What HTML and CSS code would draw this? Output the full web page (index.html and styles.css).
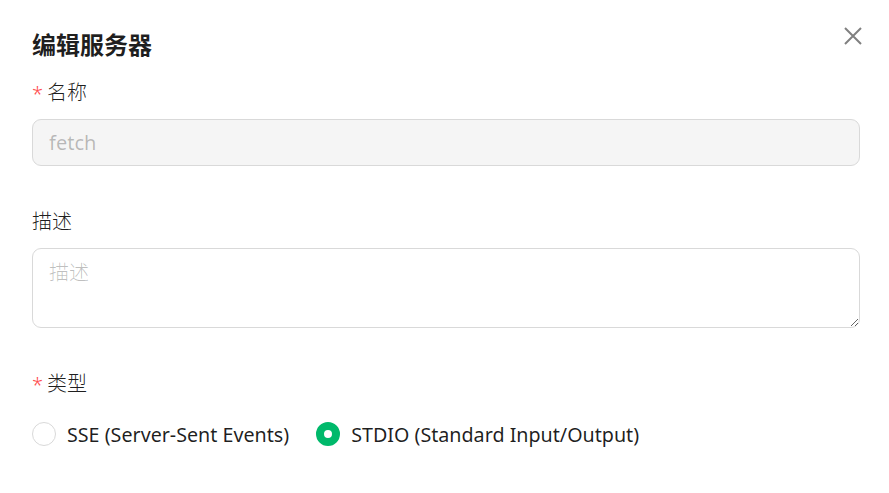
FILE: index.html
```html
<!DOCTYPE html>
<html lang="zh">
<head>
<meta charset="utf-8">
<link rel="stylesheet" href="styles.css">
</head>
<body>
<div class="modal">
  <div class="header">
    <h1 class="title">编辑服务器</h1>
    <button class="close" aria-label="关闭">
      <svg width="18" height="18" viewBox="0 0 18 18"><path d="M1 1L17 17M17 1L1 17" stroke="#808080" stroke-width="2" fill="none"/></svg>
    </button>
  </div>
  <div class="item">
    <label class="label"><span class="req">*</span>名称</label>
    <input class="input" type="text" value="fetch" disabled>
  </div>
  <div class="item">
    <label class="label">描述</label>
    <textarea class="textarea" placeholder="描述"></textarea>
  </div>
  <div class="item">
    <label class="label"><span class="req">*</span>类型</label>
    <div class="radios">
      <label class="radio"><span class="dot"></span>SSE (Server-Sent Events)</label>
      <label class="radio"><span class="dot checked"></span>STDIO (Standard Input/Output)</label>
    </div>
  </div>
</div>
</body>
</html>
```
FILE: styles.css
```css
* { box-sizing: border-box; }
html, body { margin: 0; background: #fff; }
body {
  font-family: "Noto Sans", "Noto Sans CJK SC", sans-serif;
  font-size: 20px;
  color: rgba(0,0,0,0.88);
}
.modal {
  padding: 28px 29px 0 32px;
  width: 889px;
}
.header {
  display: flex;
  justify-content: space-between;
  align-items: flex-start;
}
.title {
  margin: 0;
  font-size: 24px;
  line-height: 32px;
  font-weight: 700;
  font-family: "Noto Sans CJK SC", sans-serif;
}
.close {
  border: 0;
  background: none;
  padding: 0;
  margin: -1px -2px 0 0;
  width: 18px;
  height: 18px;
  display: flex;
}
.item { margin-top: 15px; }
.item + .item { margin-top: 38px; }
.label {
  display: flex;
  align-items: center;
  height: 32px;
  margin-bottom: 12px;
  font-family: "Noto Sans CJK SC", sans-serif;
  font-size: 20px;
  font-weight: 300;
}
.req {
  color: #ff4d4f;
  font-family: "Noto Sans", sans-serif;
  font-size: 20px;
  margin-right: 4px;
  margin-top: 4px;
}
.input {
  display: block;
  width: 100%;
  height: 47px;
  border: 1px solid #d9d9d9;
  border-radius: 9px;
  background: #f5f5f5;
  padding: 0 16px;
  font: inherit;
  font-size: 20px;
  color: rgba(0,0,0,0.25);
}
.textarea {
  display: block;
  width: 100%;
  height: 80px;
  border: 1px solid #d9d9d9;
  border-radius: 9px;
  background: #fff;
  padding: 8px 16px;
  font-family: "Noto Sans CJK SC", sans-serif;
  font-size: 20px;
  font-weight: 300;
  resize: vertical;
}
.textarea::placeholder { color: rgba(0,0,0,0.25); }
.item:last-child .label { margin-bottom: 20px; }
.radios {
  display: flex;
  gap: 27px;
  align-items: center;
}
.radio {
  display: flex;
  align-items: center;
  height: 32px;
  font-size: 19.7px;
  color: rgba(0,0,0,0.88);
}
.dot {
  width: 24px;
  height: 24px;
  border-radius: 50%;
  border: 1px solid #d9d9d9;
  background: #fff;
  margin: 0 11px 0 0;
  flex: none;
}
.dot.checked {
  border: 8px solid #00b96b;
  background: #fff;
}
```
